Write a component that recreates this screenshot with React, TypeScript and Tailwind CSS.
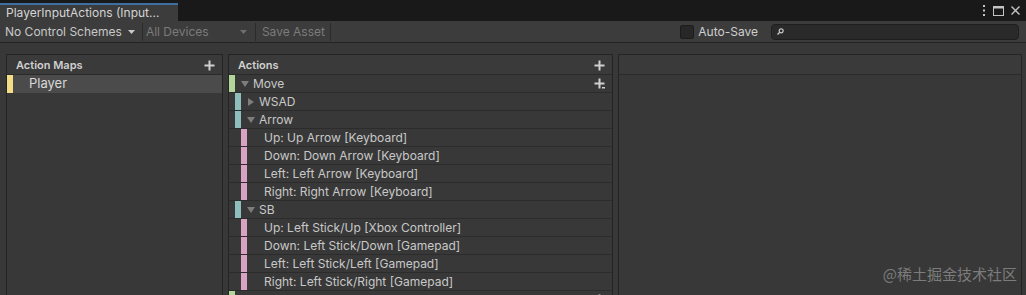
import React from "react";

type Row = {
  label: string;
  depth: 0 | 1 | 2;
  arrow?: "down" | "right";
  addDot?: boolean;
};

const rows: Row[] = [
  { label: "Move", depth: 0, arrow: "down", addDot: true },
  { label: "WSAD", depth: 1, arrow: "right" },
  { label: "Arrow", depth: 1, arrow: "down" },
  { label: "Up: Up Arrow [Keyboard]", depth: 2 },
  { label: "Down: Down Arrow [Keyboard]", depth: 2 },
  { label: "Left: Left Arrow [Keyboard]", depth: 2 },
  { label: "Right: Right Arrow [Keyboard]", depth: 2 },
  { label: "SB", depth: 1, arrow: "down" },
  { label: "Up: Left Stick/Up [Xbox Controller]", depth: 2 },
  { label: "Down: Left Stick/Down [Gamepad]", depth: 2 },
  { label: "Left: Left Stick/Left [Gamepad]", depth: 2 },
  { label: "Right: Left Stick/Right [Gamepad]", depth: 2 },
  { label: "", depth: 0, addDot: true },
];

const barColor = ["bg-[#b3d59b]", "bg-[#8fbfbd]", "bg-[#d8a2c2]"];

function Plus({ dot }: { dot?: boolean }) {
  return (
    <svg width="11" height="11" viewBox="0 0 11 11" className="shrink-0">
      <path d="M4.5 0.5h2v4h4v2h-4v4h-2v-4h-4v-2h4z" fill="#d0d0d0" />
      {dot && <rect x="8" y="9" width="3" height="1.5" fill="#d0d0d0" />}
    </svg>
  );
}

function Tri({ dir }: { dir: "down" | "right" }) {
  return (
    <svg width="8" height="8" viewBox="0 0 8 8" className="shrink-0">
      {dir === "down" ? (
        <path d="M0 1h8L4 7z" fill="#7d7d7d" />
      ) : (
        <path d="M1 0v8l6-4z" fill="#7d7d7d" />
      )}
    </svg>
  );
}

function ActionRow({ row }: { row: Row }) {
  return (
    <div className="flex h-[18px] items-stretch border-b border-[#2c2c2c]">
      <div className="flex shrink-0">
        {row.depth >= 1 && <div className="w-[6px]" />}
        {row.depth >= 2 && <div className="w-[6px]" />}
        <div className={`w-[6px] ${barColor[row.depth]}`} />
      </div>
      <div className="flex flex-1 items-center pr-[7px]">
        {row.arrow ? (
          <div className="flex items-center pl-[6px] gap-[4px]">
            <Tri dir={row.arrow} />
            <span>{row.label}</span>
          </div>
        ) : (
          <span className="pl-[17px]">{row.label}</span>
        )}
        <div className="flex-1" />
        {row.addDot && <Plus dot />}
      </div>
    </div>
  );
}

export default function App() {
  return (
    <div
      className="relative h-[295px] w-[1026px] overflow-hidden bg-[#383838] text-[12px] text-[#c8c8c8]"
      style={{ fontFamily: "Inter, 'Noto Sans', sans-serif" }}
    >
      {/* tab strip */}
      <div className="flex h-[21px] items-end bg-[#191919]">
        <div className="flex h-[18px] w-[178px] items-center border-t-2 border-[#3d6fa3] bg-[#3c3c3c] pl-[6px] text-[#d4d4d4]">
          PlayerInputActions (Input...
        </div>
        <div className="flex-1" />
        <div className="flex h-[21px] items-center gap-[7px] pr-[6px]">
          <svg width="4" height="11" viewBox="0 0 4 11">
            <rect x="1" y="0" width="2" height="2" fill="#c4c4c4" />
            <rect x="1" y="4.5" width="2" height="2" fill="#c4c4c4" />
            <rect x="1" y="9" width="2" height="2" fill="#c4c4c4" />
          </svg>
          <svg width="11" height="10" viewBox="0 0 11 10">
            <rect x="0.5" y="0.5" width="10" height="9" fill="none" stroke="#c4c4c4" />
            <rect x="0" y="0" width="11" height="2.5" fill="#c4c4c4" />
          </svg>
          <svg width="9" height="9" viewBox="0 0 9 9">
            <path d="M0.5 0.5l8 8M8.5 0.5l-8 8" stroke="#c4c4c4" strokeWidth="1.4" />
          </svg>
        </div>
      </div>

      {/* toolbar */}
      <div className="flex h-[22px] items-center border-b border-[#232323] bg-[#3c3c3c]">
        <div className="flex h-full items-center gap-[6px] pl-[5px] pr-[7px]">
          <span>No Control Schemes</span>
          <svg width="7" height="4" viewBox="0 0 7 4">
            <path d="M0 0h7L3.5 4z" fill="#c8c8c8" />
          </svg>
        </div>
        <div className="h-[18px] w-px bg-[#2a2a2a]" />
        <div className="flex h-full w-[112px] items-center justify-between pl-[3px] pr-[8px] text-[#7b7b7b]">
          <span>All Devices</span>
          <svg width="7" height="4" viewBox="0 0 7 4">
            <path d="M0 0h7L3.5 4z" fill="#6f6f6f" />
          </svg>
        </div>
        <div className="h-[18px] w-px bg-[#2a2a2a]" />
        <div className="flex h-full items-center pl-[6px] pr-[5px] text-[#7b7b7b]">Save Asset</div>
        <div className="h-[18px] w-px bg-[#2a2a2a]" />
        <div className="flex-1" />
        <div className="h-[14px] w-[14px] rounded-[2px] border border-[#1c1c1c] bg-[#272727]" />
        <span className="ml-[4px] text-[#cfcfcf]">Auto-Save</span>
        <div className="ml-[13px] mr-[7px] flex h-[16px] w-[248px] items-center rounded-[4px] border border-[#1f1f1f] bg-[#2a2a2a] pl-[5px]">
          <svg width="7" height="7" viewBox="0 0 7 7">
            <circle cx="4.2" cy="2.8" r="2" fill="none" stroke="#c4c4c4" strokeWidth="1.2" />
            <path d="M2.8 4.2L0.5 6.5" stroke="#c4c4c4" strokeWidth="1.4" />
          </svg>
        </div>
      </div>

      {/* panels */}
      <div className="flex items-start gap-[5px] pl-[6px] pt-[11px]">
        <div className="h-[260px] w-[217px] border border-[#242424] bg-[#383838]">
          <div className="flex h-[20px] items-center border-b border-[#2a2a2a] bg-[#3a3a3a] pl-[9px] pr-[7px] pt-px font-semibold text-[#d0d0d0]">
            <span className="text-[11px]">Action Maps</span>
            <div className="flex-1" />
            <Plus />
          </div>
          <div className="flex h-[18px] items-stretch bg-[#4b4b4b]">
            <div className="w-[6px] bg-[#f5dd86]" />
            <span className="flex items-center pl-[16px] text-[13px] text-[#d8d8d8]">Player</span>
          </div>
        </div>

        <div className="h-[260px] w-[385px] border border-[#242424] bg-[#383838]">
          <div className="flex h-[20px] items-center border-b border-[#2a2a2a] bg-[#3a3a3a] pl-[9px] pr-[7px] pt-px font-semibold text-[#d0d0d0]">
            <span className="text-[11px]">Actions</span>
            <div className="flex-1" />
            <Plus />
          </div>
          {rows.map((r, i) => (
            <ActionRow key={i} row={r} />
          ))}
        </div>

        <div className="h-[260px] w-[404px] border border-[#242424] bg-[#383838]">
          <div className="h-[20px] border-b border-[#2a2a2a] bg-[#3a3a3a]" />
        </div>
      </div>

      <div
        className="absolute right-[9px] top-[263px] text-[15px] text-[#ffffff]/35"
        style={{ fontFamily: "'Noto Sans CJK SC', 'Noto Sans', sans-serif" }}
      >
        @稀土掘金技术社区
      </div>
    </div>
  );
}
